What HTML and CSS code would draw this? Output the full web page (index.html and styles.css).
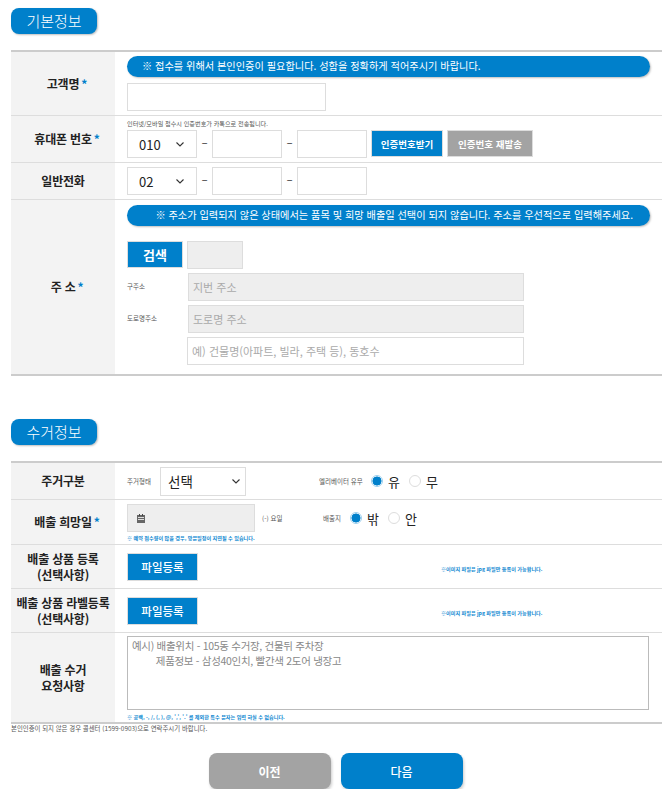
FILE: index.html
```html
<!DOCTYPE html>
<html lang="ko">
<head>
    <meta charset="UTF-8">
    <meta name="viewport" content="width=device-width, initial-scale=1.0">
    <title>접수 정보 입력</title>
    <link rel="stylesheet" href="styles.css">
</head>
<body>
    <div class="wrap">
        <h2 class="section-title">기본정보</h2>
        <div class="form-table">
            <div class="row row-name">
                <div class="label"><span>고객명<span class="req">*</span></span></div>
                <div class="cell">
                    <div class="pill pill-left">※ 접수를 위해서 본인인증이 필요합니다. 성함을 정확하게 적어주시기 바랍니다.</div>
                    <input class="field field-name" type="text">
                </div>
            </div>
            <div class="row row-mobile">
                <div class="label"><span>휴대폰 번호<span class="req">*</span></span></div>
                <div class="cell">
                    <p class="tiny kakao-note">인터넷/모바일 접수시 인증번호가 카톡으로 전송됩니다.</p>
                    <div class="phone">
                        <div class="select-box select-phone">
                            <select class="field"><option>010</option></select>
                            <svg width="8" height="5" viewBox="0 0 8 5"><path d="M.5.5 4 4 7.5.5" fill="none" stroke="#333" stroke-width="1.1"/></svg>
                        </div>
                        <span class="dash">-</span>
                        <input class="field field-phone" type="text">
                        <span class="dash">-</span>
                        <input class="field field-phone" type="text">
                        <button class="btn btn-auth">인증번호받기</button>
                        <button class="btn btn-resend">인증번호 재발송</button>
                    </div>
                </div>
            </div>
            <div class="row row-tel">
                <div class="label"><span>일반전화</span></div>
                <div class="cell">
                    <div class="phone">
                        <div class="select-box select-phone">
                            <select class="field"><option>02</option></select>
                            <svg width="8" height="5" viewBox="0 0 8 5"><path d="M.5.5 4 4 7.5.5" fill="none" stroke="#333" stroke-width="1.1"/></svg>
                        </div>
                        <span class="dash">-</span>
                        <input class="field field-phone" type="text">
                        <span class="dash">-</span>
                        <input class="field field-phone" type="text">
                    </div>
                </div>
            </div>
            <div class="row row-address">
                <div class="label"><span>주 소<span class="req">*</span></span></div>
                <div class="cell">
                    <div class="pill pill-right">※ 주소가 입력되지 않은 상태에서는 품목 및 희망 배출일 선택이 되지 않습니다. 주소를 우선적으로 입력해주세요.</div>
                    <div class="search-line">
                        <button class="btn btn-search">검색</button>
                        <input class="field field-zip" type="text" disabled>
                    </div>
                    <div class="addr-line">
                        <span class="tiny addr-label">구주소</span>
                        <input class="field field-addr" type="text" placeholder="지번 주소" disabled>
                    </div>
                    <div class="addr-line">
                        <span class="tiny addr-label">도로명주소</span>
                        <input class="field field-addr" type="text" placeholder="도로명 주소" disabled>
                    </div>
                    <div class="addr-line">
                        <span class="addr-label"></span>
                        <input class="field field-addr field-detail" type="text" placeholder="예) 건물명(아파트, 빌라, 주택 등), 동호수">
                    </div>
                </div>
            </div>
        </div>

        <h2 class="section-title section-second">수거정보</h2>
        <div class="form-table">
            <div class="row row-house">
                <div class="label"><span>주거구분</span></div>
                <div class="cell inline">
                    <span class="tiny house-label">주거형태</span>
                    <div class="select-box select-house">
                        <select class="field"><option>선택</option></select>
                        <svg width="8" height="5" viewBox="0 0 8 5"><path d="M.5.5 4 4 7.5.5" fill="none" stroke="#333" stroke-width="1.1"/></svg>
                    </div>
                    <span class="tiny elev-label">엘리베이터 유무</span>
                    <label class="radio"><input type="radio" name="elev" checked>유</label>
                    <label class="radio"><input type="radio" name="elev">무</label>
                </div>
            </div>
            <div class="row row-date">
                <div class="label"><span>배출 희망일<span class="req">*</span></span></div>
                <div class="cell">
                    <div class="inline date-line">
                        <div class="field date-box">
                            <svg width="8" height="9" viewBox="0 0 8 9"><path d="M0 1h8v8H0z" fill="#666"/><path d="M1 3h6v1H1zM1 5h6v1H1z" fill="#ddd"/><path d="M2 0h1v2H2zM5 0h1v2H5z" fill="#444"/></svg>
                        </div>
                        <span class="tiny day-label">(-) 요일</span>
                        <span class="tiny place-label">배출지</span>
                        <label class="radio"><input type="radio" name="place" checked>밖</label>
                        <label class="radio"><input type="radio" name="place">안</label>
                    </div>
                    <p class="tiny note">※ 예약 접수량이 많을 경우, 방문일정이 지연될 수 있습니다.</p>
                </div>
            </div>
            <div class="row row-file">
                <div class="label"><span>배출 상품 등록<br>(선택사항)</span></div>
                <div class="cell inline">
                    <button class="btn btn-file">파일등록</button>
                    <span class="tiny note file-note">※이미지 파일은 jpg 파일만 등록이 가능합니다.</span>
                </div>
            </div>
            <div class="row row-file">
                <div class="label"><span>배출 상품 라벨등록<br>(선택사항)</span></div>
                <div class="cell inline">
                    <button class="btn btn-file">파일등록</button>
                    <span class="tiny note file-note">※이미지 파일은 jpg 파일만 등록이 가능합니다.</span>
                </div>
            </div>
            <div class="row row-request">
                <div class="label"><span>배출 수거<br>요청사항</span></div>
                <div class="cell">
                    <textarea class="request">예시) 배출위치 - 105동 수거장, 건물뒤 주차장
         제품정보 - 삼성40인치, 빨간색 2도어 냉장고</textarea>
                    <p class="tiny note">※ 공백, -, /, (, ), @, ',', '.' 를 제외한 특수 문자는 입력 하실 수 없습니다.</p>
                </div>
            </div>
        </div>
        <p class="tiny footnote">본인인증이 되지 않은 경우 콜센터 (1599-0903)으로 연락주시기 바랍니다.</p>

        <div class="actions">
            <button class="btn-big btn-prev">이전</button>
            <button class="btn-big btn-next">다음</button>
        </div>
    </div>
</body>
</html>
```

FILE: styles.css
```css
* {
    box-sizing: border-box;
}
body {
    margin: 0;
    background: #fff;
    font-family: "Noto Sans CJK KR", "Noto Sans", sans-serif;
    color: #222;
}
.wrap {
    padding: 8px 8px 0 11px;
}
.section-title {
    width: 86px;
    height: 26px;
    margin: 0 0 16px;
    background: #0080cb;
    border-radius: 8px;
    box-shadow: 1px 1px 2px rgba(0, 0, 0, 0.25);
    color: #fff;
    font-size: 15px;
    font-weight: 300;
    line-height: 25px;
    text-align: center;
}
.section-second {
    margin-top: 43px;
}
.form-table {
    border-top: 2px solid #ccc;
    border-bottom: 2px solid #ccc;
}
.row {
    display: grid;
    grid-template-columns: 104px 1fr;
    border-bottom: 1px solid #ddd;
}
.row:last-child {
    border-bottom: none;
}
.row-name { height: 64px; }
.row-mobile { height: 47px; }
.row-tel { height: 37px; }
.row-address { height: 174px; }
.row-house { height: 37px; }
.row-date { height: 45px; }
.row-file { height: 44px; }
.row-request { height: 89px; }
.label {
    display: flex;
    align-items: center;
    justify-content: center;
    background: #f3f3f3;
    font-size: 12px;
    font-weight: 700;
    letter-spacing: -0.2px;
    line-height: 16px;
    text-align: center;
    white-space: nowrap;
}
/* star hangs after the text, the text itself stays centered */
.req {
    margin-left: 2px;
    margin-right: -8px;
    color: #0080cb;
}
.cell {
    padding: 0 12px;
    min-width: 0;
}
.inline {
    display: flex;
    align-items: center;
}
.pill {
    height: 21px;
    padding: 0 17px 0 15px;
    background: #0080cb;
    border-radius: 11px;
    box-shadow: 1px 1px 2px rgba(0, 0, 0, 0.25);
    color: #fff;
    font-size: 10.2px;
    line-height: 19px;
    white-space: nowrap;
}
.pill-left {
    margin-top: 4px;
}
.pill-right {
    margin-top: 5px;
    text-align: right;
}
.field {
    border: 1px solid #ddd;
    border-radius: 0;
    background: #fff;
    font-family: inherit;
    color: #222;
}
.field-name {
    display: block;
    width: 199px;
    height: 28px;
    margin-top: 6px;
}
.tiny {
    margin: 0;
    color: #555;
    font-size: 6.5px;
    line-height: 9px;
    white-space: nowrap;
}
.kakao-note {
    padding-top: 3px;
    font-size: 6.15px;
}
.phone {
    display: flex;
    align-items: flex-start;
    height: 28px;
    margin-top: 2px;
}
.row-tel .phone {
    margin-top: 4px;
}
/* native arrow is too heavy, chevron sits over the select */
.select-box {
    position: relative;
    flex: none;
}
.select-box select {
    appearance: none;
    display: block;
    width: 100%;
    height: 100%;
    font-size: 13px;
}
.select-box svg {
    position: absolute;
    top: 50%;
    right: 13px;
    margin-top: -2px;
}
.select-phone {
    width: 70px;
    height: 28px;
}
.select-phone select {
    padding-left: 11px;
}
.select-house {
    width: 86px;
    height: 29px;
}
.select-house select {
    padding-left: 7px;
    font-size: 13.5px;
}
.select-house svg {
    right: 6px;
}
.dash {
    width: 15px;
    color: #555;
    font-size: 12px;
    line-height: 26px;
    text-align: center;
    transform: scaleX(1.6);
}
.field-phone {
    width: 70px;
    height: 28px;
}
.btn {
    border: 1px solid #ddd;
    color: #fff;
    font-family: inherit;
    font-weight: 700;
    padding: 0;
}
.btn-auth {
    width: 72px;
    height: 27px;
    margin-left: 4px;
    background: #0080cb;
    font-size: 9.5px;
}
.btn-resend {
    width: 86px;
    height: 27px;
    margin-left: 4px;
    background: #a3a3a3;
    font-size: 9.5px;
}
.search-line {
    display: flex;
    gap: 4px;
    margin-top: 15px;
}
.btn-search {
    width: 56px;
    height: 27px;
    background: #0080cb;
    font-size: 13px;
}
.field-zip {
    width: 56px;
    height: 28px;
    background: #eee;
}
.addr-line {
    display: flex;
    align-items: flex-start;
    margin-top: 4px;
}
.addr-label {
    width: 61px;
    padding-top: 9px;
}
.field-addr {
    width: 336px;
    height: 28px;
    padding: 0 4px;
    background: #eee;
    font-size: 11px;
}
.field-detail {
    width: 337px;
    margin-left: -1px;
    background: #fff;
}
.field-addr::placeholder {
    color: #aaa;
}
.house-label {
    width: 33px;
}
.elev-label {
    margin-left: 73px;
    width: 52px;
}
.radio {
    display: flex;
    align-items: center;
    gap: 5px;
    width: 38px;
    color: #222;
    font-size: 13px;
}
.radio input {
    appearance: none;
    flex: none;
    width: 12px;
    height: 12px;
    margin: 0;
    border: 1px solid #ddd;
    border-radius: 50%;
    background: #fff;
}
.radio input:checked {
    border-color: #9ccfee;
    background: radial-gradient(circle, #0080cb 60%, #fff 68%);
}
.date-line {
    margin-top: 4px;
}
.date-box {
    display: flex;
    align-items: center;
    flex: none;
    width: 128px;
    height: 28px;
    padding-left: 9px;
    background: #eee;
}
.day-label {
    width: 61px;
    margin-left: 7px;
}
.place-label {
    width: 27px;
}
.note {
    padding-top: 1px;
    color: #0a86d0;
    font-size: 5.1px;
    font-weight: 700;
}
.btn-file {
    width: 71px;
    height: 28px;
    background: #0080cb;
    font-size: 11.5px;
    font-weight: 500;
}
.file-note {
    margin-left: 243px;
    margin-top: 4px;
    padding: 0;
}
.request {
    display: block;
    width: 522px;
    height: 74px;
    margin-top: 3px;
    padding: 1px 4px;
    border: 1px solid #bbb;
    border-radius: 0;
    color: #888;
    font-family: inherit;
    font-size: 10.5px;
    letter-spacing: -0.3px;
    line-height: 15px;
    resize: none;
}
.request + .note {
    padding-top: 2px;
}
.footnote {
    font-size: 6.4px;
}
.actions {
    display: flex;
    justify-content: center;
    gap: 10px;
    margin-top: 20px;
    padding-right: 2px;
}
.btn-big {
    width: 122px;
    height: 36px;
    border: none;
    border-radius: 8px;
    box-shadow: 1px 2px 3px rgba(0, 0, 0, 0.2);
    color: #fff;
    font-family: inherit;
    font-size: 12px;
    font-weight: 700;
}
.btn-prev {
    background: #a3a3a3;
}
.btn-next {
    background: #0080cb;
    font-weight: 500;
}
```
